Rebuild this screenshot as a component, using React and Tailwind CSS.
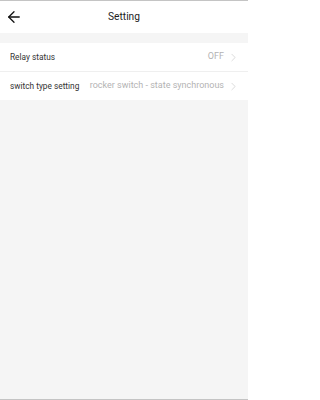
import { ArrowLeft, ChevronRight } from 'lucide-react'

const rows = [
  { label: 'Relay status', value: 'OFF' },
  { label: 'switch type setting', value: 'rocker switch - state synchronous' },
]

export default function App() {
  return (
    <div className="h-[400px] w-[248px] flex flex-col bg-[#f5f5f5] border-y border-[#c4c4c4] font-['Roboto',sans-serif] overflow-hidden">
      {/* Header */}
      <div className="h-[32px] bg-white grid grid-cols-[40px_1fr_40px] items-center">
        <ArrowLeft size={18} strokeWidth={1.7} className="ml-[5px] text-[#111]" />
        <h1 className="text-center text-[10.2px] text-[#222]">Setting</h1>
        <span />
      </div>

      {/* List */}
      <div className="mt-[10px] bg-white">
        {rows.map((r, i) => (
          <div key={r.label}
            className={`flex items-center pl-[10px] pr-[8px] ${i > 0 ? 'h-[29px] border-t border-[#efefef]' : 'h-[28px]'}`}>
            <span className="text-[8.3px] text-[#333] whitespace-nowrap">{r.label}</span>
            <span className="ml-auto pl-[8px] text-[9px] text-[#b3b3b3] whitespace-nowrap">{r.value}</span>
            <ChevronRight size={13} strokeWidth={1.4} className="ml-[3px] text-[#d0d0d0]" />
          </div>
        ))}
      </div>
    </div>
  )
}
